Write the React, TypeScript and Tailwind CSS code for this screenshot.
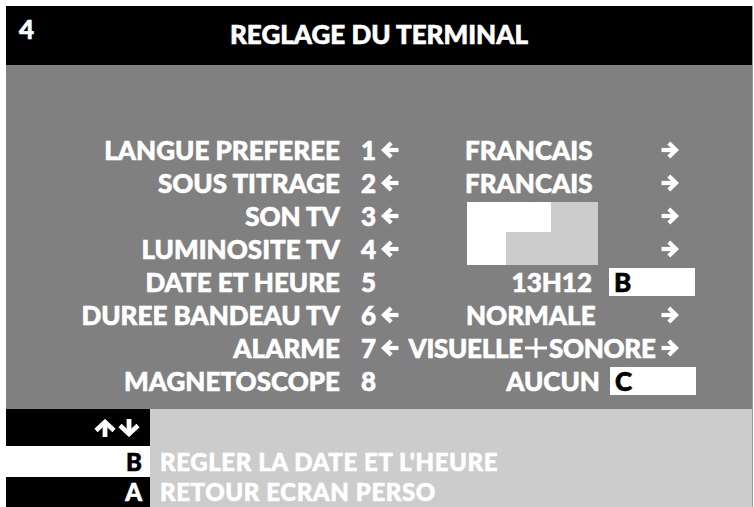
import type { ReactNode } from 'react';

const font = { fontFamily: '"Lato", "Liberation Sans", sans-serif' };

function ArrowLeft() {
  return (
    <svg width="18" height="18" viewBox="0 0 18 18" className="block">
      <path d="M3 9H17.5" stroke="white" strokeWidth="4.2" fill="none" />
      <path d="M10.2 2L3 9L10.2 16" stroke="white" strokeWidth="4.2" fill="none" />
    </svg>
  );
}

function ArrowRight() {
  return (
    <svg width="18" height="18" viewBox="0 0 18 18" className="block">
      <path d="M0.5 9H15" stroke="white" strokeWidth="4.2" fill="none" />
      <path d="M7.8 2L15 9L7.8 16" stroke="white" strokeWidth="4.2" fill="none" />
    </svg>
  );
}

function ArrowUp() {
  return (
    <svg width="24" height="18" viewBox="0 0 24 18" className="block">
      <path d="M12 18V3.5" stroke="white" strokeWidth="4.8" fill="none" />
      <path d="M3 11.5L12 3L21 11.5" stroke="white" strokeWidth="4.6" fill="none" />
    </svg>
  );
}

function ArrowDown() {
  return (
    <svg width="24" height="18" viewBox="0 0 24 18" className="block">
      <path d="M12 0V14.5" stroke="white" strokeWidth="4.8" fill="none" />
      <path d="M3 6.5L12 15L21 6.5" stroke="white" strokeWidth="4.6" fill="none" />
    </svg>
  );
}

function Plus() {
  return (
    <svg width="24" height="22" viewBox="0 0 24 22" className="mx-[1px] block flex-none">
      <path d="M1 11H23M12 1V21" stroke="white" strokeWidth="3" fill="none" />
    </svg>
  );
}

type Row = {
  label: string;
  num: string;
  arrows: boolean;
  value: ReactNode;
};

const rows: Row[] = [
  { label: 'LANGUE PREFEREE', num: '1', arrows: true, value: <span className="pl-[61px]">FRANCAIS</span> },
  { label: 'SOUS TITRAGE', num: '2', arrows: true, value: <span className="pl-[61px]">FRANCAIS</span> },
  {
    label: 'SON TV',
    num: '3',
    arrows: true,
    value: (
      <div className="ml-[63px] flex h-[30px] w-[131px] flex-none self-end">
        <div className="w-[84px] bg-white" />
        <div className="flex-1 bg-[#cccccc]" />
      </div>
    ),
  },
  {
    label: 'LUMINOSITE TV',
    num: '4',
    arrows: true,
    value: (
      <div className="ml-[63px] flex h-[33px] w-[131px] flex-none">
        <div className="w-[39px] bg-white" />
        <div className="flex-1 bg-[#cccccc]" />
      </div>
    ),
  },
  {
    label: 'DATE ET HEURE',
    num: '5',
    arrows: false,
    value: (
      <>
        <span className="w-[188px] flex-none text-right">13H12</span>
        <div className="ml-[17px] flex h-[28px] w-[86px] flex-none items-center bg-white pl-[5px] text-black">B</div>
      </>
    ),
  },
  { label: 'DUREE BANDEAU TV', num: '6', arrows: true, value: <span className="pl-[62px]">NORMALE</span> },
  {
    label: 'ALARME',
    num: '7',
    arrows: true,
    value: (
      <span className="flex w-full items-center justify-center tracking-[-0.3px]">
        VISUELLE
        <Plus />
        SONORE
      </span>
    ),
  },
  {
    label: 'MAGNETOSCOPE',
    num: '8',
    arrows: false,
    value: (
      <>
        <span className="w-[196px] flex-none text-right">AUCUN</span>
        <div className="ml-[10px] flex h-[28px] w-[86px] flex-none items-center bg-white pl-[5px] text-black">C</div>
      </>
    ),
  },
];

export default function App() {
  return (
    <div
      className="h-[507px] w-[754px] overflow-hidden bg-white pl-[6px] pt-[6px] [-webkit-text-stroke:0.6px_currentcolor]"
      style={font}
    >
      <div className="w-[747px] border-r border-[#9a9a9a]">
        {/* Header */}
        <header className="relative flex h-[59px] items-start justify-center bg-black text-white">
          <span className="absolute left-[13px] top-[8px] text-[26px] font-black leading-[30px]">4</span>
          <h1 className="pt-[13px] text-[26px] font-black leading-[30px]">REGLAGE DU TERMINAL</h1>
        </header>

        {/* Settings list */}
        <main className="h-[344px] bg-[#808080] pt-[68px] text-[26px] font-black text-white">
          {rows.map((row) => (
            <div key={row.label} className="flex h-[33px] items-center leading-none">
              <div className="w-[334px] text-right">{row.label}</div>
              <div className="ml-[21px] w-[20px]">{row.num}</div>
              <div className="flex w-[23px] justify-start">{row.arrows && <ArrowLeft />}</div>
              <div className="flex h-full w-[256px] items-center">{row.value}</div>
              <div className="flex w-[20px] justify-start pl-[1px]">{row.arrows && <ArrowRight />}</div>
            </div>
          ))}
        </main>

        {/* Footer keys */}
        <footer className="bg-[#cccccc] text-[24px] font-black leading-none text-white">
          <div className="flex h-[37px]">
            <div className="flex w-[144px] items-center justify-end bg-black pr-[9px]">
              <ArrowUp />
              <ArrowDown />
            </div>
          </div>
          <div className="flex h-[31px] items-center">
            <div className="flex h-full w-[144px] items-center justify-end bg-white pr-[8px] text-black">B</div>
            <span className="pl-[10px] tracking-[0.6px]">REGLER LA DATE ET L'HEURE</span>
          </div>
          <div className="flex h-[30px] items-center">
            <div className="flex h-full w-[144px] items-center justify-end bg-black pr-[8px]">A</div>
            <span className="pl-[10px] tracking-[0.6px]">RETOUR ECRAN PERSO</span>
          </div>
        </footer>
      </div>
    </div>
  );
}
